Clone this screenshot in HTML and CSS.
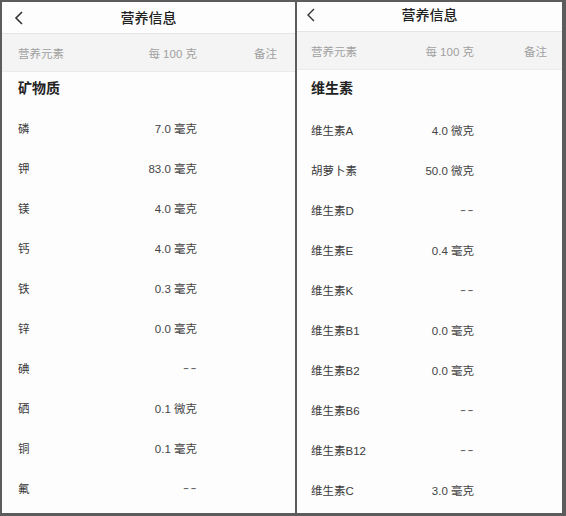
FILE: index.html
```html
<!DOCTYPE html>
<html lang="zh-CN">
<head>
<meta charset="utf-8">
<link rel="stylesheet" href="styles.css">
</head>
<body>
<div class="frame">
  <section class="panel panel-left">
    <header class="topbar">
      <svg class="back" width="10" height="14" viewBox="0 0 10 14"><path d="M8 1 L2 7 L8 13" fill="none" stroke="#333" stroke-width="1.6"/></svg>
      <h1 class="title">营养信息</h1>
      <span></span>
    </header>
    <div class="grid head">
      <span>营养元素</span><span class="val">每 100 克</span><span class="note">备注</span>
    </div>
    <div class="section">矿物质</div>
    <div class="grid row"><span>磷</span><span class="val">7.0 毫克</span><span></span></div>
    <div class="grid row"><span>钾</span><span class="val">83.0 毫克</span><span></span></div>
    <div class="grid row"><span>镁</span><span class="val">4.0 毫克</span><span></span></div>
    <div class="grid row"><span>钙</span><span class="val">4.0 毫克</span><span></span></div>
    <div class="grid row"><span>铁</span><span class="val">0.3 毫克</span><span></span></div>
    <div class="grid row"><span>锌</span><span class="val">0.0 毫克</span><span></span></div>
    <div class="grid row"><span>碘</span><span class="val"><span class="dash">--</span></span><span></span></div>
    <div class="grid row"><span>硒</span><span class="val">0.1 微克</span><span></span></div>
    <div class="grid row"><span>铜</span><span class="val">0.1 毫克</span><span></span></div>
    <div class="grid row"><span>氟</span><span class="val"><span class="dash">--</span></span><span></span></div>
  </section>
  <section class="panel panel-right">
    <header class="topbar">
      <svg class="back" width="10" height="14" viewBox="0 0 10 14"><path d="M8 1 L2 7 L8 13" fill="none" stroke="#333" stroke-width="1.4"/></svg>
      <h1 class="title">营养信息</h1>
      <span></span>
    </header>
    <div class="grid head">
      <span>营养元素</span><span class="val">每 100 克</span><span class="note">备注</span>
    </div>
    <div class="section">维生素</div>
    <div class="grid row"><span>维生素A</span><span class="val">4.0 微克</span><span></span></div>
    <div class="grid row"><span>胡萝卜素</span><span class="val">50.0 微克</span><span></span></div>
    <div class="grid row"><span>维生素D</span><span class="val"><span class="dash">--</span></span><span></span></div>
    <div class="grid row"><span>维生素E</span><span class="val">0.4 毫克</span><span></span></div>
    <div class="grid row"><span>维生素K</span><span class="val"><span class="dash">--</span></span><span></span></div>
    <div class="grid row"><span>维生素B1</span><span class="val">0.0 毫克</span><span></span></div>
    <div class="grid row"><span>维生素B2</span><span class="val">0.0 毫克</span><span></span></div>
    <div class="grid row"><span>维生素B6</span><span class="val"><span class="dash">--</span></span><span></span></div>
    <div class="grid row"><span>维生素B12</span><span class="val"><span class="dash">--</span></span><span></span></div>
    <div class="grid row"><span>维生素C</span><span class="val">3.0 毫克</span><span></span></div>
  </section>
</div>
</body>
</html>
```
FILE: styles.css
```css
* { box-sizing: border-box; margin: 0; padding: 0; }
html, body { width: 566px; height: 516px; overflow: hidden; }
body {
  background: #5c5c5c;
  font-family: "Liberation Sans", "Noto Sans CJK SC", sans-serif;
  color: #333;
}
.frame {
  display: flex;
  gap: 2px;
  padding: 2px 3px 3px 2px;
  height: 516px;
}
.panel {
  background: #fdfdfd;
  display: flex;
  flex-direction: column;
  overflow: hidden;
}
.panel-left { width: 293px; }
.panel-right { width: 265px; }

.topbar {
  display: grid;
  grid-template-columns: 40px 1fr 40px;
  align-items: center;
  border-bottom: 1px solid #e4e4e4;
}
.panel-left .topbar { height: 32px; }
.panel-right .topbar { height: 30px; padding-bottom: 4px; }
.back { display: block; }
.panel-left .back { margin-left: 12px; }
.panel-right .back { margin-left: 9px; }
.title {
  font-size: 14px;
  font-weight: 500;
  color: #222;
  text-align: center;
  line-height: 18px;
}

.grid {
  display: grid;
  align-items: center;
}
.panel-left .grid { grid-template-columns: 100px 79px 1fr; padding: 0 18px 0 16px; }
.panel-right .grid { grid-template-columns: 90px 73px 1fr; padding: 0 15px 0 14px; }
.val { text-align: right; white-space: nowrap; }
.note { text-align: right; }
.dash {
  display: inline-block;
  font-size: 12px;
  letter-spacing: 1px;
  margin-right: -1px;
  transform: scaleX(1.5);
  transform-origin: right center;
  color: #666;
}

.head {
  height: 38px;
  background: #f4f4f4;
  border-bottom: 1px solid #ebebeb;
  font-size: 11.5px;
  color: #a0a0a0;
}

.section {
  font-size: 14px;
  font-weight: 700;
  color: #222;
  line-height: 18px;
}
.panel-left .section { padding: 7px 16px 11px; }
.panel-right .section { padding: 9px 14px 13px; }

.row {
  height: 40px;
  flex: none;
  font-size: 11.5px;
  color: #3a3a3a;
}
.row .val { color: #444; }
```
